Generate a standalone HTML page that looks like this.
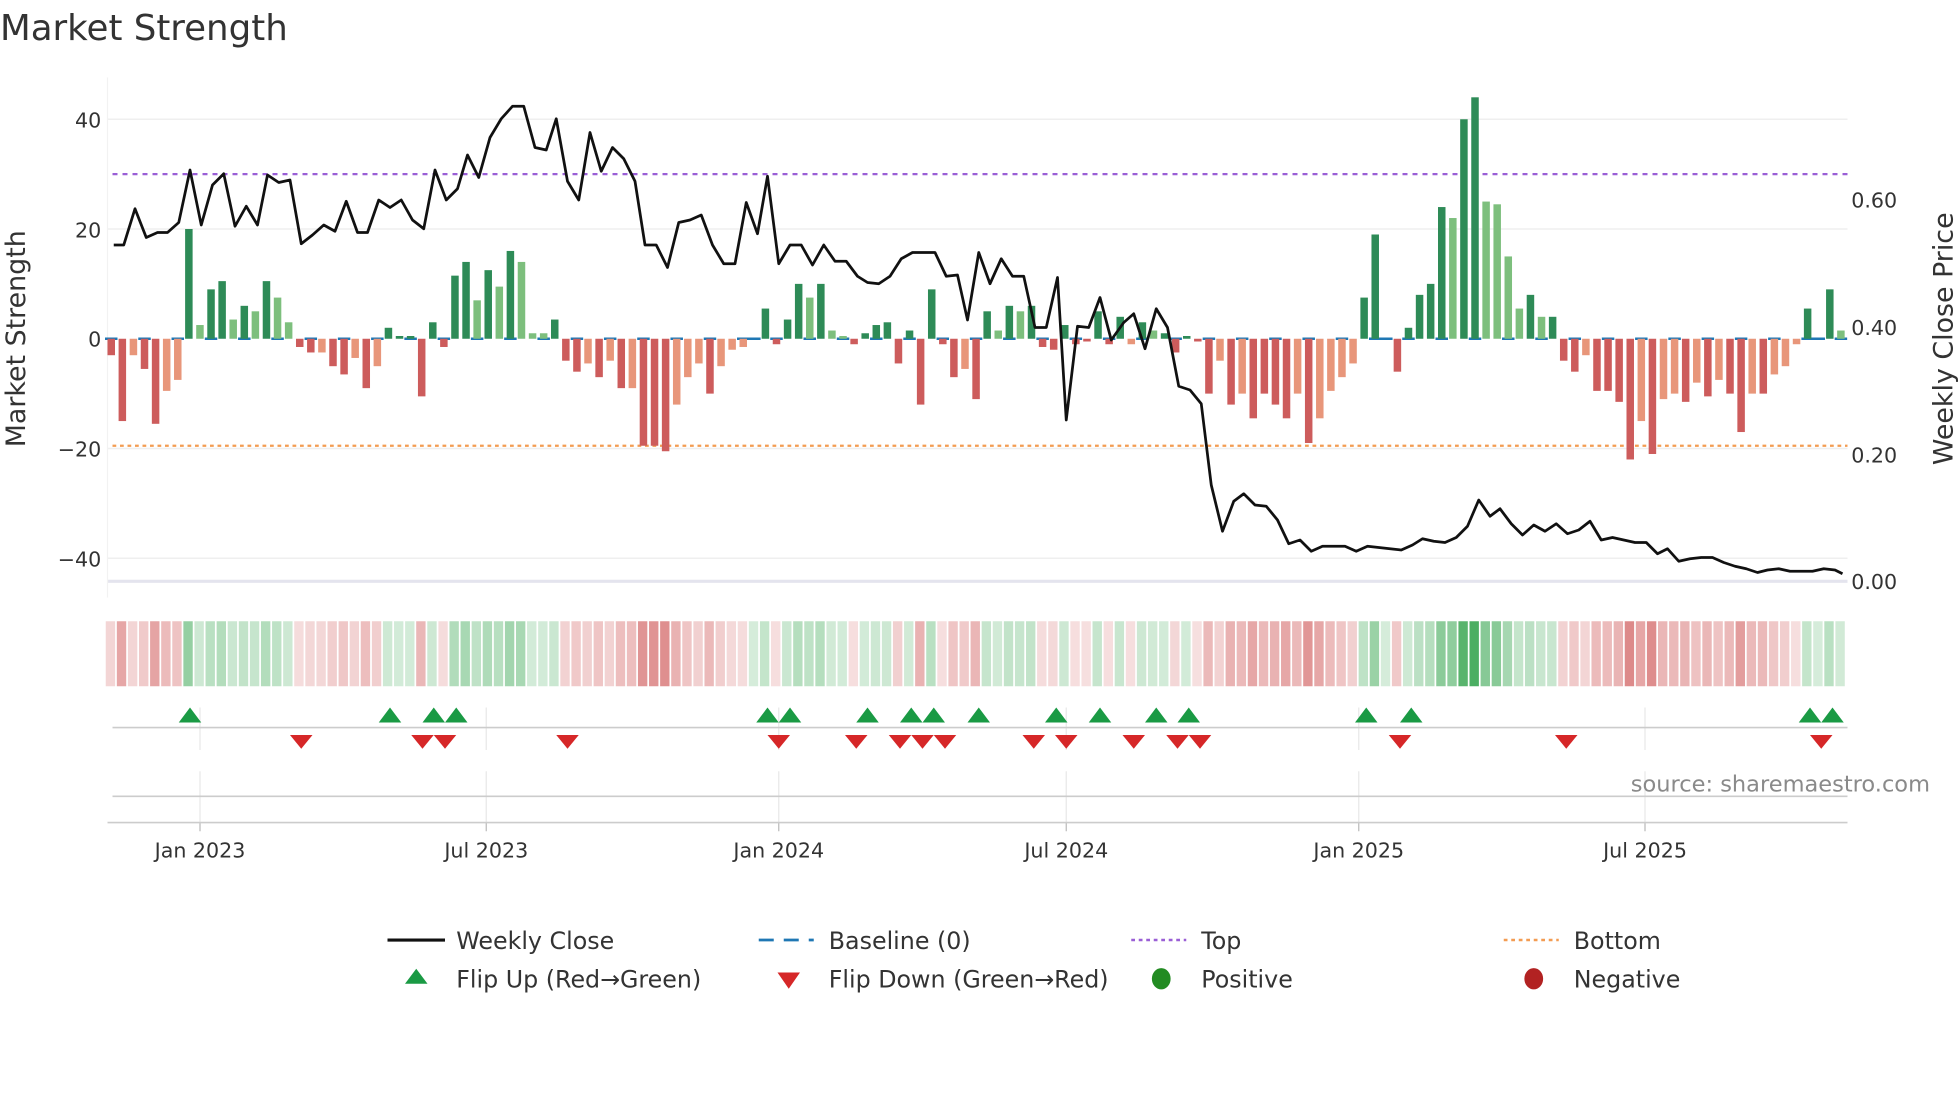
<!DOCTYPE html>
<html><head><meta charset="utf-8">
<style>
html,body{margin:0;padding:0;background:#fff;width:1960px;height:1102px;overflow:hidden}
svg{display:block;font-family:"DejaVu Sans","Liberation Sans",sans-serif}
</style></head>
<body>
<svg id="s" width="1960" height="1102" viewBox="0 0 1568 881.6" xmlns="http://www.w3.org/2000/svg">
<rect width="1568" height="882" fill="#fff"/>
<text x="0" y="32" font-size="28.5" fill="#333">Market Strength</text>
<g id="grid"></g>
<g id="bars"></g>
<g id="heat"></g>
<g id="flips"></g>
<g font-size="16.5" fill="#333">
<text x="81" y="102" text-anchor="end">40</text>
<text x="81" y="190" text-anchor="end">20</text>
<text x="81" y="277" text-anchor="end">0</text>
<text x="81" y="365" text-anchor="end">−20</text>
<text x="81" y="453" text-anchor="end">−40</text>
<text x="1481" y="166">0.60</text>
<text x="1481" y="268">0.40</text>
<text x="1481" y="370">0.20</text>
<text x="1481" y="471">0.00</text>
<text x="160" y="686" text-anchor="middle">Jan 2023</text>
<text x="389" y="686" text-anchor="middle">Jul 2023</text>
<text x="623" y="686" text-anchor="middle">Jan 2024</text>
<text x="853" y="686" text-anchor="middle">Jul 2024</text>
<text x="1087" y="686" text-anchor="middle">Jan 2025</text>
<text x="1316" y="686" text-anchor="middle">Jul 2025</text>
</g>
<text transform="translate(20,271) rotate(-90)" font-size="21.5" fill="#333" text-anchor="middle">Market Strength</text>
<text transform="translate(1562,271) rotate(-90)" font-size="21.5" fill="#333" text-anchor="middle">Weekly Close Price</text>
<text x="1544" y="633" font-size="18" fill="#8a8a8a" text-anchor="end">source: sharemaestro.com</text>
<g font-size="19" fill="#333">
<line x1="310" y1="752" x2="356" y2="752" stroke="#111" stroke-width="2.5"/>
<text x="365" y="759">Weekly Close</text>
<line x1="607" y1="752" x2="651" y2="752" stroke="#1f77b4" stroke-width="2.2" stroke-dasharray="12,8"/>
<text x="663" y="759">Baseline (0)</text>
<line x1="905" y1="752" x2="949" y2="752" stroke="#9a5fd6" stroke-width="2" stroke-dasharray="3,3"/>
<text x="961" y="759">Top</text>
<line x1="1203" y1="752" x2="1247" y2="752" stroke="#f39c52" stroke-width="2" stroke-dasharray="3,3"/>
<text x="1259" y="759">Bottom</text>
<path d="M333,775 L342,787 L324,787Z" fill="#1a9a44"/>
<text x="365" y="790">Flip Up (Red→Green)</text>
<path d="M622,778 L640,778 L631,791Z" fill="#d62728"/>
<text x="663" y="790">Flip Down (Green→Red)</text>
<ellipse cx="929" cy="783" rx="7.5" ry="8.5" fill="#228b22"/>
<text x="961" y="790">Positive</text>
<ellipse cx="1227" cy="783" rx="7.5" ry="8.5" fill="#b22222"/>
<text x="1259" y="790">Negative</text>
</g>
<g id="price"></g>
</svg>
<script>
var NS="http://www.w3.org/2000/svg";
function el(p,t,a){var e=document.createElementNS(NS,t);for(var k in a)e.setAttribute(k,a[k]);document.getElementById(p).appendChild(e);return e;}
var Y0=271,U=4.39;
function yv(v){return Y0-v*U;}
[40,20,-20,-40].forEach(function(v){el("grid","line",{x1:86,x2:1478,y1:yv(v),y2:yv(v),stroke:"#efefef","stroke-width":1.2});});
el("grid","line",{x1:86,x2:1478,y1:465,y2:465,stroke:"#e4e4ee","stroke-width":2.5});
el("grid","line",{x1:86,x2:86,y1:62,y2:478,stroke:"#f2f2f2","stroke-width":1});
[160,389,623,853,1087,1316].forEach(function(x){
 el("grid","line",{x1:x,x2:x,y1:566,y2:600,stroke:"#e8e8e8","stroke-width":1});
 el("grid","line",{x1:x,x2:x,y1:617,y2:658,stroke:"#e8e8e8","stroke-width":1});
 el("grid","line",{x1:x,x2:x,y1:658,y2:665,stroke:"#bbb","stroke-width":1});
});
el("grid","line",{x1:90,x2:1478,y1:582,y2:582,stroke:"#ccc","stroke-width":1.3});
el("grid","line",{x1:90,x2:1478,y1:637,y2:637,stroke:"#ccc","stroke-width":1.3});
el("grid","line",{x1:86,x2:1478,y1:658,y2:658,stroke:"#ccc","stroke-width":1.3});
el("grid","line",{x1:90,x2:1478,y1:yv(30),y2:yv(30),stroke:"#9a5fd6","stroke-width":1.8,"stroke-dasharray":"4,4"});
el("grid","line",{x1:90,x2:1478,y1:yv(-19.5),y2:yv(-19.5),stroke:"#f39c52","stroke-width":1.8,"stroke-dasharray":"3,3"});
var d="-3,-15,-3L,-5.5,-15.5,-9.5L,-7.5L,20,2.5L,9,10.5,3.5L,6,5L,10.5,7.5L,3L,-1.5,-2.5,-2.5L,-5,-6.5,-3.5L,-9,-5L,2,0.5,0.5,-10.5,3,-1.5,11.5,14,7L,12.5,9.5L,16,14L,1L,1L,3.5,-4,-6,-4.5L,-7,-4L,-9,-9L,-19.5,-19.5,-20.5,-12L,-7L,-4.5L,-10,-5L,-2L,-1.5L,0,5.5,-1,3.5,10,7.5L,10,1.5L,0.5L,-1,1,2.5,3,-4.5,1.5,-12,9,-1,-7,-5.5L,-11,5,1.5L,6,5L,6,-1.5,-2,2.5,-1,-0.5,5,-1,4,-1L,3,1.5L,1,-2.5,0.5,-0.5,-10,-4L,-12,-10L,-14.5,-10,-12,-14.5,-10L,-19,-14.5L,-9.5L,-7L,-4.5L,7.5,19,0,-6,2,8,10,24,22L,40,44,25L,24.5L,15L,5.5L,8,4L,4,-4,-6,-3L,-9.5,-9.5,-11.5,-22,-15L,-21,-11L,-10L,-11.5,-8L,-10.5,-7.5L,-10,-17,-10L,-10,-6.5L,-5L,-1L,5.5,0,9,1.5L".split(",");
d.forEach(function(s,i){
 var L=s.indexOf("L")>=0,v=parseFloat(s);
 var x=89+8.87*i;
 var c=v>=0?(L?"#7dbf7d":"#2e8b57"):(L?"#e8967a":"#cd5c5c");
 if(i%3==0||v===0) el("bars","line",{x1:x-5,x2:x+5,y1:Y0,y2:Y0,stroke:"#1f77b4","stroke-width":2});
 if(v!==0){var y1=Math.min(yv(v),Y0),h=Math.abs(v*U);el("bars","rect",{x:x-3,y:y1,width:6,height:h,fill:c});}
 var a,col;
 if(v>=0){a=0.2+0.65*Math.min(v,44)/44;col="rgba(44,160,70,"+a.toFixed(2)+")";}
 else{a=0.17+0.5*Math.min(-v,22)/22;col="rgba(205,80,80,"+a.toFixed(2)+")";}
 el("heat","rect",{x:x-4.4,y:497,width:7.5,height:52,fill:col});
});
var up=[152,312,347,365,614,632,694,729,747,783,845,880,925,951,1093,1129,1448,1466];
var dn=[241,338,356,454,623,685,720,738,756,827,853,907,942,960,1120,1253,1457];
up.forEach(function(x){el("flips","path",{d:"M"+x+",566 L"+(x+9)+",578 L"+(x-9)+",578Z",fill:"#1a9a44"});});
dn.forEach(function(x){el("flips","path",{d:"M"+(x-9)+",588 L"+(x+9)+",588 L"+x+",599Z",fill:"#d62728"});});
var p="91,196 99,196 108,167 117,190 126,186 134,186 143,178 152,136 161,180 170,148 179,139 188,181 197,165 206,180 214,140 223,146 232,144 241,195 250,188 259,180 268,185 277,161 286,186 294,186 303,160 312,166 321,160 330,176 339,183 348,136 357,160 366,151 374,124 383,142 392,110 401,95 410,85 419,85 428,118 437,120 445,95 454,145 463,160 472,106 481,137 490,118 499,127 508,145 516,196 525,196 534,214 543,178 552,176 561,172 570,196 579,211 588,211 597,162 606,187 614,141 623,211 632,196 641,196 650,212 659,196 668,209 677,209 686,221 694,226 703,227 712,221 721,207 730,202 739,202 748,202 757,221 766,220 774,256 783,202 792,227 801,207 810,221 819,221 828,262 837,262 846,222 853,336 862,261 871,262 880,238 889,272 899,258 907,251 916,279 925,247 934,262 943,309 952,312 961,323 969,388 978,425 987,401 995,395 1004,404 1013,405 1022,416 1031,435 1040,432 1049,441 1058,437 1067,437 1076,437 1085,441 1094,437 1103,438 1112,439 1121,440 1130,436 1138,431 1147,433 1156,434 1165,430 1174,421 1183,400 1192,413 1200,407 1209,419 1218,428 1227,420 1236,425 1245,419 1254,427 1263,424 1272,417 1281,432 1290,430 1299,432 1308,434 1317,434 1326,443 1334,439 1343,449 1352,447 1361,446 1370,446 1379,450 1388,453 1397,455 1406,458 1414,456 1423,455 1432,457 1441,457 1450,457 1459,455 1468,456 1474,459";
el("price","polyline",{points:p,fill:"none",stroke:"#111","stroke-width":2.2,"stroke-linejoin":"round"});
</script>
</body></html>
